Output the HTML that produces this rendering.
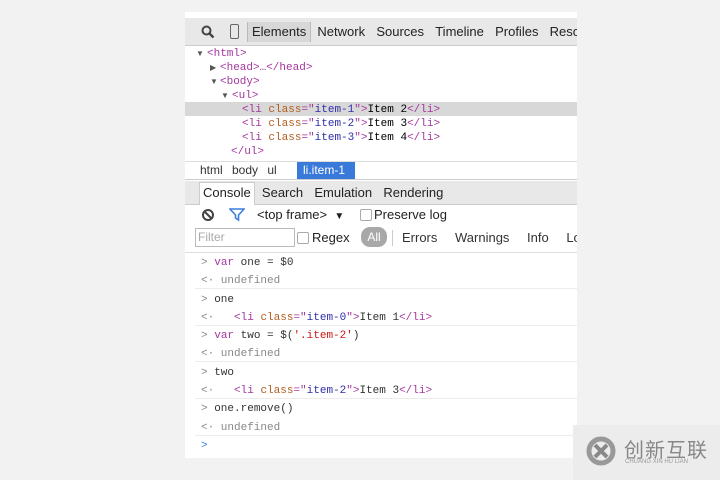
<!DOCTYPE html><html><head><style>
body{margin:0;width:720px;height:480px;background:#f2f2f2;position:relative;overflow:hidden;font-family:"Liberation Sans",sans-serif}
.p{position:absolute;left:185px;top:12px;width:392px;height:446px;background:#fff;overflow:hidden}
.a{position:absolute;white-space:nowrap}
.m{font-family:"Liberation Mono",monospace;font-size:11px}
.e{position:absolute;white-space:nowrap;font-family:"Liberation Mono",monospace;font-size:11px;line-height:14px;height:14px}
.tr{position:absolute;font-size:8px;color:#555;line-height:14px}
.t{color:#a4379e}.at{color:#b35d1e}.v{color:#2f2ea8}.g{color:#888}
.sep{position:absolute;left:10px;right:0;height:1px;background:#ececec}
</style></head><body>
<div class="p">
<div class="a" style="left:0;top:6px;width:392px;height:27px;background:#e8e8e8;border-bottom:1px solid #ccc"></div>
<svg class="a" style="left:16px;top:13px" width="14" height="14"><circle cx="5.5" cy="5.5" r="4" fill="none" stroke="#444" stroke-width="2"/><line x1="8.5" y1="8.5" x2="12.5" y2="12.5" stroke="#444" stroke-width="2.4"/></svg>
<div class="a" style="left:45px;top:12px;width:7px;height:13px;border:1px solid #666;border-radius:2px"></div>
<div class="a" style="left:62px;top:10px;width:62px;height:20px;background:#d8d8d8;border-left:1px solid #bbb;border-right:1px solid #bbb"></div>
<div class="a" style="left:67px;top:12px;font-size:13px;color:#222;word-spacing:2px">Elements &nbsp;Network &nbsp;Sources &nbsp;Timeline &nbsp;Profiles &nbsp;Resources</div>
<div class="a" style="left:0;top:90px;width:392px;height:14px;background:#d8d8d8"></div>
<span class="tr" style="left:11px;top:35px">▼</span><div class="e t" style="left:22px;top:35px">&lt;html&gt;</div>
<span class="tr" style="left:25px;top:49px">▶</span><div class="e t" style="left:35px;top:49px">&lt;head&gt;…&lt;/head&gt;</div>
<span class="tr" style="left:25px;top:63px">▼</span><div class="e t" style="left:35px;top:63px">&lt;body&gt;</div>
<span class="tr" style="left:36px;top:77px">▼</span><div class="e t" style="left:47px;top:77px">&lt;ul&gt;</div>
<div class="e" style="left:57px;top:91px"><span class="t">&lt;li</span> <span class="at">class</span><span class="t">="</span><span class="v">item-1</span><span class="t">"&gt;</span>Item 2<span class="t">&lt;/li&gt;</span></div>
<div class="e" style="left:57px;top:105px"><span class="t">&lt;li</span> <span class="at">class</span><span class="t">="</span><span class="v">item-2</span><span class="t">"&gt;</span>Item 3<span class="t">&lt;/li&gt;</span></div>
<div class="e" style="left:57px;top:119px"><span class="t">&lt;li</span> <span class="at">class</span><span class="t">="</span><span class="v">item-3</span><span class="t">"&gt;</span>Item 4<span class="t">&lt;/li&gt;</span></div>
<div class="e t" style="left:46px;top:133px">&lt;/ul&gt;</div>
<div class="a" style="left:0;top:149px;width:392px;height:1px;background:#ddd"></div>
<div class="a" style="left:0;top:167px;width:392px;height:1px;background:#ccc"></div>
<div class="a" style="left:112px;top:150px;width:58px;height:17px;background:#3879d9"></div>
<div class="a" style="left:15px;top:151px;font-size:12px;color:#333;word-spacing:6px">html body ul</div>
<div class="a" style="left:118px;top:151px;font-size:12px;color:#fff">li.item-1</div>
<div class="a" style="left:0;top:169px;width:392px;height:23px;background:#e8e8e8;border-bottom:1px solid #ccc"></div>
<div class="a" style="left:14px;top:170px;width:54px;height:22px;background:#fff;border:1px solid #ccc;border-bottom:none"></div>
<div class="a" style="left:18px;top:173px;font-size:13px;color:#222;word-spacing:2px">Console &nbsp;Search &nbsp;Emulation &nbsp;Rendering</div>
<svg class="a" style="left:16px;top:196px" width="14" height="14"><circle cx="7" cy="7" r="5" fill="none" stroke="#444" stroke-width="2"/><line x1="3.5" y1="3.5" x2="10.5" y2="10.5" stroke="#444" stroke-width="2"/></svg>
<svg class="a" style="left:44px;top:196px" width="16" height="14"><path d="M1 1H15L9.5 7V12L6.5 10V7Z" fill="none" stroke="#3a7fdc" stroke-width="1.6"/></svg>
<div class="a" style="left:72px;top:195px;font-size:13px;color:#222">&lt;top frame&gt; &nbsp;<span style="font-size:10px">▼</span></div>
<div class="a" style="left:175px;top:197px;width:10px;height:10px;border:1px solid #aaa;border-radius:2px"></div>
<div class="a" style="left:189px;top:195px;font-size:13px;color:#222">Preserve log</div>
<div class="a" style="left:10px;top:216px;width:98px;height:17px;border:1px solid #bbb"></div>
<div class="a" style="left:13px;top:218px;font-size:12px;color:#aaa">Filter</div>
<div class="a" style="left:112px;top:220px;width:10px;height:10px;border:1px solid #aaa;border-radius:2px"></div>
<div class="a" style="left:127px;top:218px;font-size:13px;color:#222">Regex</div>
<div class="a" style="left:176px;top:215px;width:26px;height:20px;background:#a8a8a8;border-radius:9px;color:#fff;font-size:12px;text-align:center;line-height:20px">All</div>
<div class="a" style="left:207px;top:218px;width:1px;height:16px;background:#ccc"></div>
<div class="a" style="left:217px;top:218px;font-size:13px;color:#333;word-spacing:14px">Errors Warnings Info Logs</div>
<div class="a" style="left:0;top:240px;width:392px;height:1px;background:#ddd"></div>
<div class="a m" style="left:16px;top:242px;line-height:18.3px;color:#333">
<span class="g">&gt;</span> <span class="t">var</span> one = $0<br><span class="g">&lt;· undefined</span><br><span class="g">&gt;</span> one<br><span class="g">&lt;·</span> &nbsp;&nbsp;<span class="t">&lt;li</span> <span class="at">class</span><span class="t">="</span><span class="v">item-0</span><span class="t">"&gt;</span>Item 1<span class="t">&lt;/li&gt;</span><br>
<span class="g">&gt;</span> <span class="t">var</span> two = $(<span style="color:#c41a16">'.item-2'</span>)<br><span class="g">&lt;· undefined</span><br><span class="g">&gt;</span> two<br><span class="g">&lt;·</span> &nbsp;&nbsp;<span class="t">&lt;li</span> <span class="at">class</span><span class="t">="</span><span class="v">item-2</span><span class="t">"&gt;</span>Item 3<span class="t">&lt;/li&gt;</span><br>
<span class="g">&gt;</span> one.remove()<br><span class="g">&lt;· undefined</span><br><span style="color:#3a7fdc">&gt;</span></div>
<div class="sep" style="top:276px"></div><div class="sep" style="top:313px"></div><div class="sep" style="top:349px"></div><div class="sep" style="top:386px"></div><div class="sep" style="top:423px"></div>
</div>
<div class="a" style="left:573px;top:425px;width:147px;height:55px;background:#ececec"></div>
<svg class="a" style="left:586px;top:436px" width="32" height="30"><circle cx="15" cy="15" r="12" fill="none" stroke="#999" stroke-width="5"/><path d="M9 9L21 21M21 9L9 21" stroke="#888" stroke-width="4"/></svg>
<div class="a" style="left:624px;top:434px;font-size:20px;color:#888;font-family:'Noto Sans CJK SC',sans-serif;letter-spacing:1px">创新互联</div>
<div class="a" style="left:625px;top:459px;font-size:6px;color:#999">CHUANG XIN HU LIAN</div>
</body></html>
